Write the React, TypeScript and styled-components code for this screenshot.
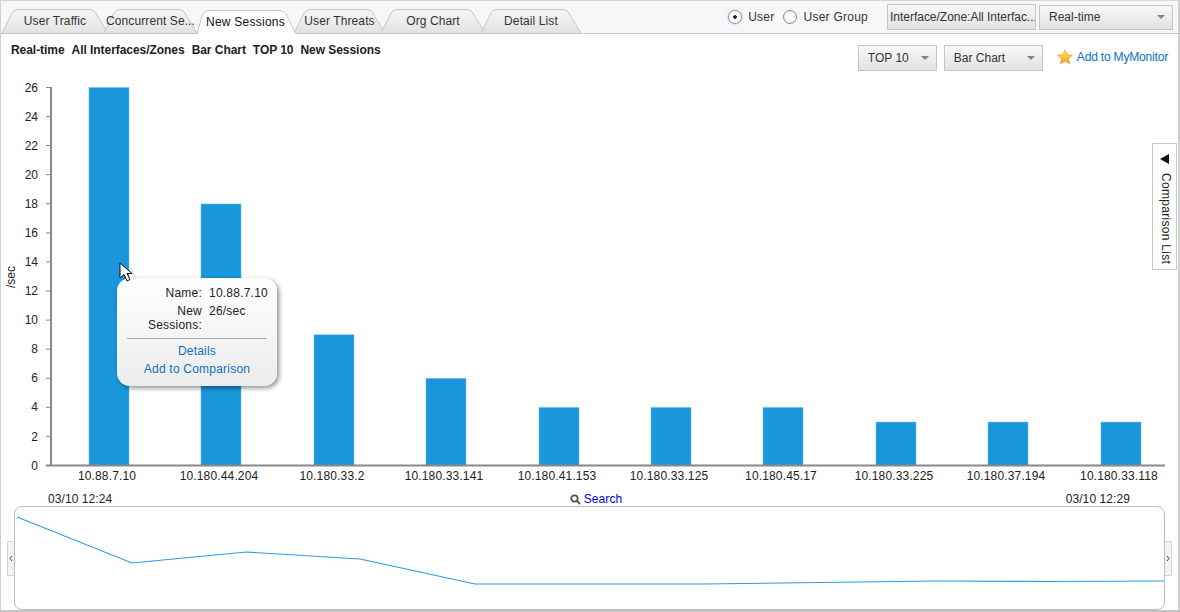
import React from "react";
import styled, { createGlobalStyle } from "styled-components";

const GlobalStyle = createGlobalStyle`
  html, body {
    margin: 0;
    padding: 0;
    background: #fff;
  }
  body {
    font-family: "Liberation Sans", Arial, sans-serif;
    font-size: 12px;
    color: #222;
  }
`;

const Page = styled.div`
  width: 1180px;
  height: 612px;
  display: flex;
  flex-direction: column;
  overflow: hidden;
  box-sizing: border-box;
  border-top: 1px solid #d6d6d6;
  border-bottom: 2px solid #c4c4c4;
  border-left: 1px solid #d0d0d0;
`;

const TopBar = styled.div`
  height: 33px;
  flex: none;
  display: flex;
  justify-content: space-between;
  background: #f7f7f7;
  border-bottom: 1px solid #c8c8c8;
  border-right: 2px solid #d0d0d0;
  box-sizing: border-box;
`;

const Tabs = styled.div`
  display: flex;
  align-items: flex-end;
  padding-top: 7px;
`;

const TabItem = styled.div<{ $w: number; $active?: boolean }>`
  position: relative;
  width: ${(p) => p.$w}px;
  height: 25px;
  margin-right: -6px;
  margin-bottom: ${(p) => (p.$active ? "-1px" : "0")};
  z-index: ${(p) => (p.$active ? 2 : 1)};
  display: flex;
  align-items: center;
  justify-content: center;
  color: ${(p) => (p.$active ? "#111" : "#333")};
  letter-spacing: ${(p) => (p.$active ? "0.25px" : "0.1px")};
  svg {
    position: absolute;
    left: 0;
    top: 0;
  }
  span {
    position: relative;
    margin-top: ${(p) => (p.$active ? "0" : "1px")};
  }
`;

const TopControls = styled.div`
  display: flex;
  align-items: center;
  padding-right: 5px;
`;

const RadioLabel = styled.label<{ $gap: number }>`
  display: flex;
  align-items: center;
  gap: 6px;
  margin-right: ${(p) => p.$gap}px;
  letter-spacing: 0.25px;
  color: #333;
`;

const RadioDot = styled.span<{ $on?: boolean }>`
  width: 14px;
  height: 14px;
  box-sizing: border-box;
  border-radius: 50%;
  border: 1px solid ${(p) => (p.$on ? "#7a9cc6" : "#8a8a8a")};
  background: radial-gradient(circle, ${(p) => (p.$on ? "#222 0 1.5px, #fff 2px" : "#fff 0, #eee 100%")});
  box-shadow: ${(p) => (p.$on ? "0 0 2px #8fb4e0" : "none")};
`;

const SelectBox = styled.div<{ $w: number; $h?: number }>`
  width: ${(p) => p.$w}px;
  height: ${(p) => p.$h ?? 26}px;
  box-sizing: border-box;
  flex: none;
  display: flex;
  align-items: center;
  justify-content: space-between;
  padding: 0 7px 0 9px;
  margin-left: 3px;
  border: 1px solid #c6c6c6;
  background: linear-gradient(#f8f8f8, #e2e2e2);
  color: #333;
  white-space: nowrap;
  overflow: hidden;
`;

const PlainBox = styled(SelectBox)`
  padding: 0 2px;
  justify-content: flex-start;
  margin-left: 0;
  letter-spacing: -0.02px;
`;

const Caret = styled.i`
  width: 0;
  height: 0;
  border-left: 4px solid transparent;
  border-right: 4px solid transparent;
  border-top: 4px solid #8b8467;
`;

const Body = styled.div`
  flex: 1;
  display: flex;
  flex-direction: column;
  position: relative;
  border-right: 2px solid #d0d0d0;
  min-height: 0;
`;

const HeadRow = styled.div`
  height: 41px;
  flex: none;
  display: flex;
  justify-content: space-between;
  align-items: flex-start;
  padding: 11px 10px 0 10px;
  box-sizing: border-box;
`;

const Heading = styled.div`
  display: flex;
  gap: 7px;
  font-weight: bold;
  color: #222;
  font-size: 12px;
  margin-top: -2px;
  letter-spacing: -0.05px;
`;

const HeadControls = styled.div`
  display: flex;
  align-items: center;
  gap: 4px;
`;

const MonitorLink = styled.a`
  display: flex;
  align-items: center;
  gap: 4px;
  margin-left: 10px;
  margin-bottom: 2px;
  color: #0b6fc0;
  white-space: nowrap;
  letter-spacing: -0.18px;
`;

const ChartArea = styled.div`
  position: relative;
  height: 414px;
  flex: none;
  svg text {
    font-family: "Liberation Sans", Arial, sans-serif;
    font-size: 12px;
    fill: #222;
  }
`;

const Tooltip = styled.div`
  position: absolute;
  left: 116px;
  top: 203px;
  width: 160px;
  height: 108px;
  box-sizing: border-box;
  padding: 8px 10px 0;
  border-radius: 13px;
  background: linear-gradient(#ffffff, #ececec);
  box-shadow: 2px 2px 5px rgba(0, 0, 0, 0.45);
  color: #222;
  letter-spacing: 0.22px;
`;

const TipGrid = styled.div`
  display: grid;
  grid-template-columns: 75px 1fr;
  column-gap: 7px;
  row-gap: 4px;
  line-height: 14px;
  dt {
    margin: 0;
    text-align: right;
  }
  dd {
    margin: 0;
  }
`;

const TipRule = styled.hr`
  border: 0;
  border-top: 1px solid #a8a8a8;
  margin: 6px 0 3px;
`;

const TipLink = styled.a`
  display: block;
  text-align: center;
  color: #0b6fc0;
  line-height: 18px;
`;

const Pointer = styled.svg`
  position: absolute;
  left: 118px;
  top: 187px;
`;

const CompareTab = styled.div`
  position: absolute;
  right: 1px;
  top: 68px;
  width: 25px;
  height: 127px;
  box-sizing: border-box;
  border: 1px solid #c8c8c8;
  background: #fff;
  display: flex;
  flex-direction: column;
  align-items: center;
  padding-top: 10px;
  gap: 9px;
  color: #222;
  span {
    writing-mode: vertical-rl;
    letter-spacing: 0.3px;
    white-space: nowrap;
    margin-left: 3px;
  }
`;

const LeftTriangle = styled.i`
  width: 0;
  height: 0;
  border-top: 5px solid transparent;
  border-bottom: 5px solid transparent;
  border-right: 9px solid #111;
`;

const DateRow = styled.div`
  height: 17px;
  flex: none;
  box-sizing: border-box;
  display: flex;
  justify-content: space-between;
  align-items: center;
  padding: 3px 48px 0 47px;
  color: #222;
  letter-spacing: 0.08px;
`;

const SearchLink = styled.a`
  display: flex;
  align-items: center;
  gap: 3px;
  color: #0000e0;
  margin-left: 14px;
`;

const OverviewRow = styled.div`
  flex: 1;
  display: flex;
  align-items: center;
  padding-left: 6px;
  padding-right: 6px;
  min-height: 0;
`;

const Handle = styled.div<{ $side: "left" | "right" }>`
  width: 7px;
  height: 35px;
  flex: none;
  box-sizing: border-box;
  display: flex;
  align-items: center;
  justify-content: center;
  background: #f2f2f2;
  border: 1px solid #d4d4d4;
  border-${(p) => (p.$side === "left" ? "right" : "left")}: 0;
  border-radius: ${(p) => (p.$side === "left" ? "2px 0 0 2px" : "0 2px 2px 0")};
`;

const OverviewBox = styled.div`
  flex: 1;
  height: 104px;
  box-sizing: border-box;
  border: 1px solid #bdbdbd;
  border-radius: 8px;
  background: #fff;
  overflow: hidden;
`;

const tabs = [
  { label: "User Traffic", w: 108 },
  { label: "Concurrent Se...", w: 95 },
  { label: "New Sessions", w: 107, active: true },
  { label: "User Threats", w: 93 },
  { label: "Org Chart", w: 106 },
  { label: "Detail List", w: 102 },
];

const bars = [
  { ip: "10.88.7.10", x: 109, v: 26 },
  { ip: "10.180.44.204", x: 221, v: 18 },
  { ip: "10.180.33.2", x: 334, v: 9 },
  { ip: "10.180.33.141", x: 446, v: 6 },
  { ip: "10.180.41.153", x: 559, v: 4 },
  { ip: "10.180.33.125", x: 671, v: 4 },
  { ip: "10.180.45.17", x: 783, v: 4 },
  { ip: "10.180.33.225", x: 896, v: 3 },
  { ip: "10.180.37.194", x: 1008, v: 3 },
  { ip: "10.180.33.118", x: 1121, v: 3 },
];

const trend = "2,10 117,56 231,45 345,52 460,77 575,77 690,77 805,75.5 920,74 1035,74.5 1150,74";

const BASE_Y = 465;
const UNIT = 14.54;

const Tab: React.FC<{ label: string; w: number; active?: boolean }> = ({ label, w, active }) => (
  <TabItem $w={w} $active={active}>
    <svg width={w} height={25}>
      <defs>
        <linearGradient id={"tab" + w} x1="0" y1="0" x2="0" y2="1">
          <stop offset="0" stopColor={active ? "#ffffff" : "#f6f6f6"} />
          <stop offset="1" stopColor={active ? "#ffffff" : "#e2e2e2"} />
        </linearGradient>
      </defs>
      <path
        d={`M${active ? 5 : 1} 25 L10 7 Q12 1.5 18 1.5 L${w - 20} 1.5 Q${w - 14} 1.5 ${w - 12} 7 L${w - (active ? 3 : 1)} 25`}
        fill={`url(#tab${w})`}
        stroke="#c4c4c4"
      />
    </svg>
    <span>{label}</span>
  </TabItem>
);

const Star = () => (
  <svg width="16" height="16" viewBox="0 0 16 16">
    <defs>
      <linearGradient id="star" x1="0" y1="0" x2="0" y2="1">
        <stop offset="0" stopColor="#ffe468" />
        <stop offset="1" stopColor="#f59a1a" />
      </linearGradient>
    </defs>
    <path
      d="M8 .8l2.2 4.8 5.2.6-3.9 3.5 1.1 5.2L8 12.3l-4.6 2.6 1.1-5.2L.6 6.2l5.2-.6z"
      fill="url(#star)"
      stroke="#e8a238"
      strokeWidth="0.7"
    />
  </svg>
);

const BarChart = () => (
  <svg width="1177" height="414" viewBox="1 75 1177 414">
    <text transform="translate(15 277) rotate(-90)" textAnchor="middle">/sec</text>
    {Array.from({ length: 14 }, (_, i) => {
      const y = BASE_Y - i * 2 * UNIT;
      return (
        <g key={i}>
          <line x1="46" x2="51" y1={y + 0.5} y2={y + 0.5} stroke="#888" />
          <text x="38" y={y + 4.6} textAnchor="end">{i * 2}</text>
        </g>
      );
    })}
    {bars.map((b) => (
      <g key={b.ip}>
        <rect
          x={b.x - 20}
          y={BASE_Y - b.v * UNIT + 0.7}
          width="40"
          height={b.v * UNIT}
          fill="#1a96dc"
          stroke="#62b6e8"
          strokeWidth="0.5"
        />
        <text x={b.x - 2} y="480" textAnchor="middle" letterSpacing="0.15">{b.ip}</text>
      </g>
    ))}
    <line x1="51" x2="51" y1="87" y2="466" stroke="#888" strokeWidth="2" />
    <line x1="46" x2="1165" y1={BASE_Y + 0.5} y2={BASE_Y + 0.5} stroke="#888" strokeWidth="2" />
  </svg>
);

const App: React.FC = () => {
  return (
    <Page>
      <GlobalStyle />
      <TopBar>
        <Tabs>
          {tabs.map((t) => (
            <Tab key={t.label} {...t} />
          ))}
        </Tabs>
        <TopControls>
          <RadioLabel $gap={9}>
            <RadioDot $on />
            User
          </RadioLabel>
          <RadioLabel $gap={19}>
            <RadioDot />
            User Group
          </RadioLabel>
          <PlainBox $w={149}>Interface/Zone:All Interfac...</PlainBox>
          <SelectBox $w={134} $h={25}>
            Real-time
            <Caret />
          </SelectBox>
        </TopControls>
      </TopBar>
      <Body>
        <HeadRow>
          <Heading>
            <span>Real-time</span>
            <span>All Interfaces/Zones</span>
            <span>Bar Chart</span>
            <span>TOP 10</span>
            <span>New Sessions</span>
          </Heading>
          <HeadControls>
            <SelectBox $w={79}>
              TOP 10
              <Caret />
            </SelectBox>
            <SelectBox $w={99}>
              Bar Chart
              <Caret />
            </SelectBox>
            <MonitorLink>
              <Star />
              Add to MyMonitor
            </MonitorLink>
          </HeadControls>
        </HeadRow>
        <ChartArea>
          <BarChart />
          <Tooltip>
            <TipGrid>
              <dt>Name:</dt>
              <dd>10.88.7.10</dd>
              <dt>New Sessions:</dt>
              <dd>26/sec</dd>
            </TipGrid>
            <TipRule />
            <TipLink>Details</TipLink>
            <TipLink>Add to Comparison</TipLink>
          </Tooltip>
          <Pointer width="20" height="22" viewBox="0 0 20 22">
            <path d="M11 6l6 10" stroke="#ccc" strokeWidth="1" fill="none" />
            <path d="M1 1v15l4-3.5 3 6.5 3-1.5-3-6h5z" fill="#fff" stroke="#111" strokeWidth="1" />
          </Pointer>
          <CompareTab>
            <LeftTriangle />
            <span>Comparison List</span>
          </CompareTab>
        </ChartArea>
        <DateRow>
          <span>03/10 12:24</span>
          <SearchLink>
            <svg width="11" height="11" viewBox="0 0 11 11">
              <circle cx="4.5" cy="4.5" r="3.2" fill="none" stroke="#555" strokeWidth="1.8" />
              <path d="M7 7l3 3" stroke="#555" strokeWidth="2" />
            </svg>
            Search
          </SearchLink>
          <span>03/10 12:29</span>
        </DateRow>
        <OverviewRow>
          <Handle $side="left">
            <svg width="4" height="7" viewBox="0 0 4 7">
              <path d="M3 1L1 3.5 3 6" fill="none" stroke="#444" />
            </svg>
          </Handle>
          <OverviewBox>
            <svg width="1150" height="102" viewBox="0 0 1150 102">
              <polyline points={trend} fill="none" stroke="#2a9be0" strokeWidth="1.1" />
            </svg>
          </OverviewBox>
          <Handle $side="right">
            <svg width="4" height="7" viewBox="0 0 4 7">
              <path d="M1 1l2 2.5L1 6" fill="none" stroke="#444" />
            </svg>
          </Handle>
        </OverviewRow>
      </Body>
    </Page>
  );
};

export default App;
